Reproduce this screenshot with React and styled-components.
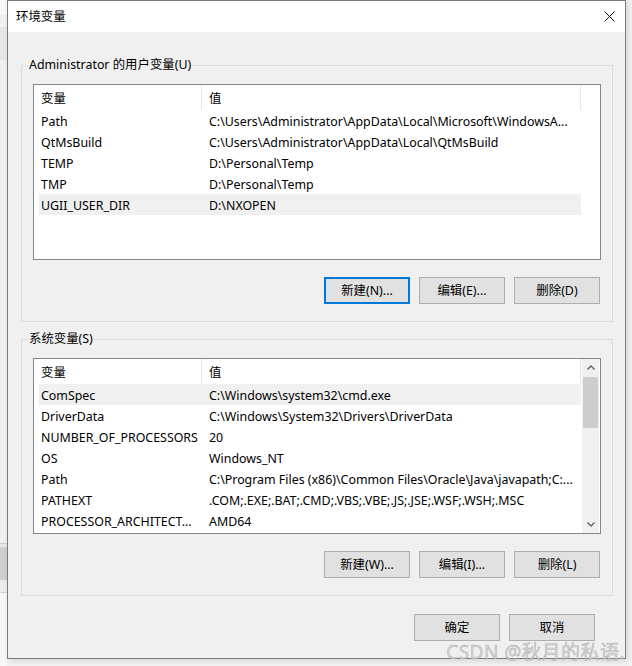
import React from "react";
import styled, { createGlobalStyle } from "styled-components";

const FONT = `"Noto Sans", "Noto Sans CJK SC", sans-serif`;

const Global = createGlobalStyle`
  html, body { margin: 0; padding: 0; }
  body {
    background: #f2f2f2;
    font-family: ${FONT};
    font-size: 12.4px;
    color: #000;
    width: 632px;
    height: 666px;
    overflow: hidden;
  }
`;

const Page = styled.div`
  display: flex;
  align-items: flex-start;
  width: 632px;
  height: 666px;
`;

const Behind = styled.div`
  width: 7px;
  height: 666px;
  display: flex;
  flex-direction: column;
  flex: none;
`;

const Band = styled.div`
  height: ${(p) => p.h}px;
  background: ${(p) => p.bg};
  border-bottom: ${(p) => (p.line ? `1px solid ${p.line}` : "none")};
  flex: none;
`;

const Dialog = styled.div`
  position: relative;
  width: 617px;
  height: 657px;
  border: 1px solid #7a7a7a;
  background: #f0f0f0;
  box-shadow: 2px 2px 6px rgba(0, 0, 0, 0.12);
  display: flex;
  flex-direction: column;
  flex: none;
`;

const TitleBar = styled.div`
  height: 31px;
  background: #fff;
  display: flex;
  align-items: center;
  justify-content: space-between;
  padding: 0 10px 0 8px;
  flex: none;
`;

const Title = styled.span`
  font-size: 12.4px;
  line-height: 16px;
  margin-top: 1px;
`;

const Body = styled.div`
  flex: 1;
  display: flex;
  flex-direction: column;
  padding: 25px 12px 0 13px;
`;

const Group = styled.fieldset`
  margin: ${(p) => p.mt || 0}px 0 0 0;
  padding: 11px 11px 17px 11px;
  border: 1px solid #dcdcdc;
  min-width: 0;
  display: flex;
  flex-direction: column;
`;

const Legend = styled.legend`
  font-size: 12.4px;
  line-height: 16px;
  padding: 0 1px;
  margin-left: -5px;
  color: #000;
`;

const List = styled.div`
  height: 174px;
  border: 1px solid #828790;
  background: #fff;
  display: flex;
  overflow: hidden;
`;

const ListMain = styled.div`
  width: 547px;
  display: flex;
  flex-direction: column;
  flex: none;
`;

const Header = styled.div`
  height: 25px;
  display: grid;
  grid-template-columns: 168px 1fr;
  border-right: 1px solid #e5e5e5;
  flex: none;
`;

const HeadCell = styled.div`
  display: flex;
  align-items: center;
  padding-left: 7px;
  border-right: ${(p) => (p.divider ? "1px solid #e5e5e5" : "none")};
  white-space: nowrap;
`;

const Rows = styled.div`
  display: flex;
  flex-direction: column;
  padding-left: 5px;
`;

const Row = styled.div`
  height: 21px;
  display: grid;
  grid-template-columns: 163px 1fr;
  align-items: center;
  background: ${(p) => (p.selected ? "#f0f0f0" : "transparent")};
`;

const Cell = styled.div`
  padding-left: ${(p) => p.pl}px;
  white-space: nowrap;
  overflow: hidden;
  line-height: 16px;
  padding-top: 2px;
`;

const ScrollBar = styled.div`
  width: 17px;
  margin-left: 1px;
  background: #f0f0f0;
  display: flex;
  flex-direction: column;
  flex: none;
`;

const ScrollArrow = styled.div`
  height: 17px;
  display: flex;
  align-items: center;
  justify-content: center;
  flex: none;
`;

const ScrollTrack = styled.div`
  flex: 1;
  display: flex;
  flex-direction: column;
  padding: 1px 1px 0 1px;
`;

const Thumb = styled.div`
  height: 51px;
  background: #cdcdcd;
`;

const ButtonRow = styled.div`
  display: flex;
  justify-content: flex-end;
  gap: 9px;
  margin-top: ${(p) => p.mt}px;
  padding-right: 1px;
`;

const Button = styled.button`
  width: 86px;
  height: 27px;
  box-sizing: border-box;
  font-family: ${FONT};
  font-size: 12.4px;
  color: #000;
  background: #e1e1e1;
  border: ${(p) => (p.focused ? "2px solid #0078d7" : "1px solid #adadad")};
  padding: 0 0 1px 0;
  margin: 0;
  cursor: default;
  white-space: nowrap;
`;

const Footer = styled.div`
  display: flex;
  justify-content: flex-end;
  gap: 9px;
  padding: 18px 18px 0 0;
`;

const Watermark = styled.div`
  position: absolute;
  right: 0px;
  bottom: -7px;
  font-family: ${FONT};
  font-size: 19px;
  letter-spacing: 0.5px;
  color: rgba(212, 212, 212, 0.85);
  -webkit-text-stroke: 0.5px rgba(130, 130, 130, 0.55);
  white-space: nowrap;
  pointer-events: none;
`;

const Chevron = ({ up }) => (
  <svg width="8" height="5" viewBox="0 0 8 5">
    <path
      d={up ? "M0.5 4.5 L4 1 L7.5 4.5" : "M0.5 0.5 L4 4 L7.5 0.5"}
      fill="none"
      stroke="#606060"
      strokeWidth="1.4"
    />
  </svg>
);

const CloseIcon = () => (
  <svg width="11" height="11" viewBox="0 0 11 11">
    <path d="M0.5 0.5 L10.5 10.5 M10.5 0.5 L0.5 10.5" stroke="#111" strokeWidth="1" fill="none" />
  </svg>
);

const userVars = [
  ["Path", "C:\\Users\\Administrator\\AppData\\Local\\Microsoft\\WindowsA..."],
  ["QtMsBuild", "C:\\Users\\Administrator\\AppData\\Local\\QtMsBuild"],
  ["TEMP", "D:\\Personal\\Temp"],
  ["TMP", "D:\\Personal\\Temp"],
  ["UGII_USER_DIR", "D:\\NXOPEN"],
];

const sysVars = [
  ["ComSpec", "C:\\Windows\\system32\\cmd.exe"],
  ["DriverData", "C:\\Windows\\System32\\Drivers\\DriverData"],
  ["NUMBER_OF_PROCESSORS", "20"],
  ["OS", "Windows_NT"],
  ["Path", "C:\\Program Files (x86)\\Common Files\\Oracle\\Java\\javapath;C:..."],
  ["PATHEXT", ".COM;.EXE;.BAT;.CMD;.VBS;.VBE;.JS;.JSE;.WSF;.WSH;.MSC"],
  ["PROCESSOR_ARCHITECT...", "AMD64"],
];

function VarList({ rows, selected, scroll }) {
  return (
    <List>
      <ListMain>
        <Header>
          <HeadCell divider>变量</HeadCell>
          <HeadCell>值</HeadCell>
        </Header>
        <Rows>
          {rows.map(([k, v], i) => (
            <Row key={k + i} selected={i === selected}>
              <Cell pl={2}>{k}</Cell>
              <Cell pl={7}>{v}</Cell>
            </Row>
          ))}
        </Rows>
      </ListMain>
      {scroll && (
        <ScrollBar>
          <ScrollArrow>
            <Chevron up />
          </ScrollArrow>
          <ScrollTrack>
            <Thumb />
          </ScrollTrack>
          <ScrollArrow>
            <Chevron />
          </ScrollArrow>
        </ScrollBar>
      )}
    </List>
  );
}

export default function App() {
  return (
    <>
      <Global />
      <Page>
        <Behind>
          <Band h={15} bg="#f7f7f7" />
          <Band h={12} bg="#f0f0f0" />
          <Band h={33} bg="#e6e6e6" />
          <Band h={483} bg="#f0f0f0" line="#d0d0d0" />
          <Band h={3} bg="#e8e8e8" />
          <Band h={33} bg="#cfcfcf" />
          <Band h={12} bg="#ececec" line="#d6d6d6" />
          <Band h={73} bg="#f7f7f7" />
        </Behind>
        <Dialog>
          <TitleBar>
            <Title>环境变量</Title>
            <CloseIcon />
          </TitleBar>
          <Body>
            <Group>
              <Legend>Administrator 的用户变量(U)</Legend>
              <VarList rows={userVars} selected={4} />
              <ButtonRow mt={17}>
                <Button focused>新建(N)...</Button>
                <Button>编辑(E)...</Button>
                <Button>删除(D)</Button>
              </ButtonRow>
            </Group>
            <Group mt={9}>
              <Legend>系统变量(S)</Legend>
              <VarList rows={sysVars} selected={0} scroll />
              <ButtonRow mt={17}>
                <Button>新建(W)...</Button>
                <Button>编辑(I)...</Button>
                <Button>删除(L)</Button>
              </ButtonRow>
            </Group>
            <Footer>
              <Button>确定</Button>
              <Button>取消</Button>
            </Footer>
          </Body>
          <Watermark>CSDN @秋月的私语.</Watermark>
        </Dialog>
      </Page>
    </>
  );
}
